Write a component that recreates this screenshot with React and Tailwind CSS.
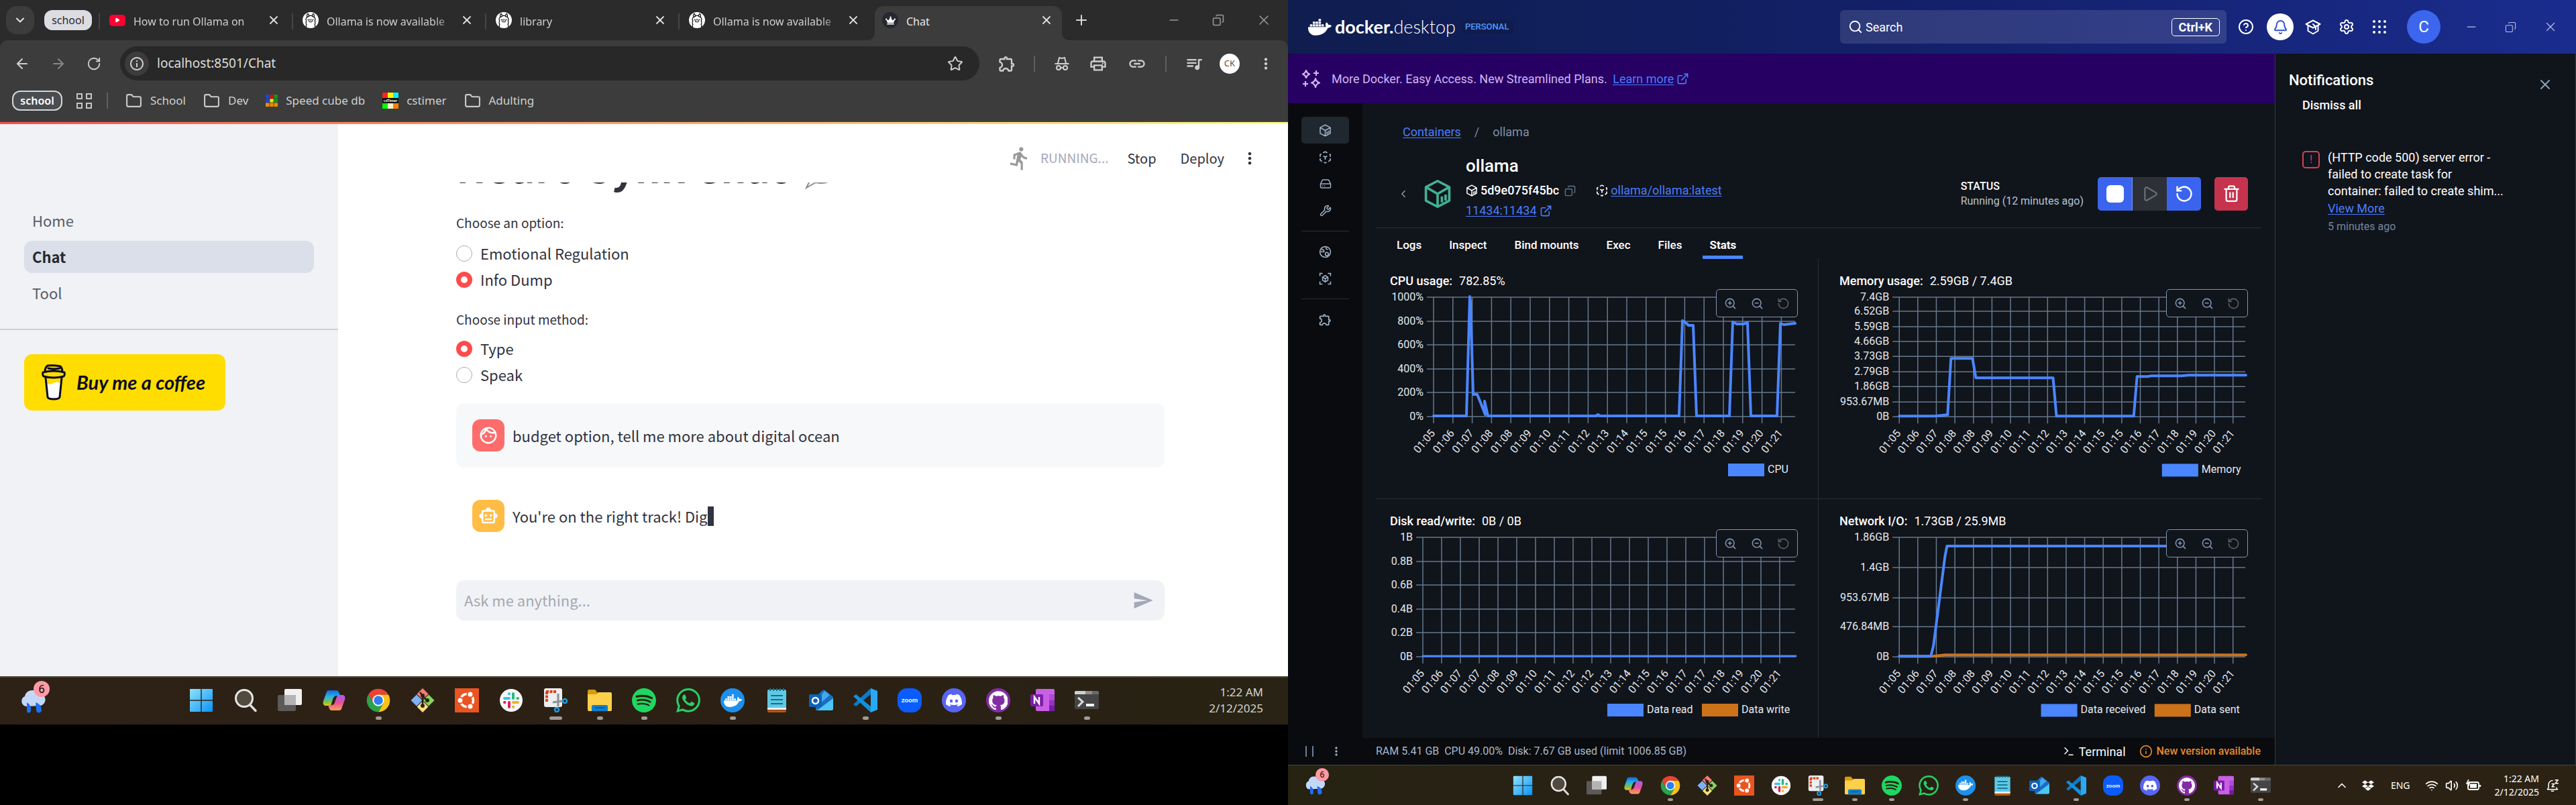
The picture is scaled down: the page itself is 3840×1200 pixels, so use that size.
import React from "react";
import {
  ArrowLeft, ArrowRight, RotateCw, X, Plus, Minus, Copy, Star, ChevronDown, ChevronLeft, ChevronUp,
  ExternalLink, Search, ZoomIn, ZoomOut, RotateCcw, Trash2, Bell, Settings, HardDrive, Wrench,
  CircleHelp, Info, Wifi, Volume2, Terminal, Play, Folder,
} from "lucide-react";
import { SiOllama, SiSpotify, SiWhatsapp, SiDiscord, SiGithub } from "react-icons/si";
import { FaDocker, FaDropbox, FaCrown } from "react-icons/fa";
import {
  MdDirectionsRun, MdMoreVert, MdSend, MdOutlineFace, MdOutlineSmartToy, MdOutlineExtension,
  MdOutlinePrint, MdLink, MdQueueMusic, MdInfoOutline,
} from "react-icons/md";

/* ---------- taskbar icons ---------- */

const WindowsIcon = () => (
  <svg viewBox="0 0 36 36" className="size-full">
    <defs>
      <linearGradient id="win" x1="0" y1="0" x2="1" y2="1">
        <stop offset="0" stopColor="#8fe3ff" /><stop offset="1" stopColor="#0a93f5" />
      </linearGradient>
    </defs>
    <path fill="url(#win)" d="M1 2q0-1 1-1h15.3v16.3H1zM18.7 1H34q1 0 1 1v15.300H18.700zM1 18.700h16.300V35H2q-1 0-1-1zM18.700 18.700H35V34q0 1-1 1H18.700z" />
  </svg>
);
const SearchTaskIcon = () => (
  <svg viewBox="0 0 36 36" className="size-full">
    <circle cx="16" cy="15" r="12.500" fill="#514a3f" stroke="#e6e6e8" strokeWidth="3" />
    <path d="M25 25l8 8.500" stroke="#dcdde0" strokeWidth="3.500" strokeLinecap="round" />
  </svg>
);
const TaskViewIcon = () => (
  <svg viewBox="0 0 36 36" className="size-full">
    <rect x="0" y="10" width="27" height="24" rx="2" fill="#5b5a58" />
    <rect x="10" y="1" width="26" height="24" rx="2" fill="#f0f0f1" />
    <rect x="10" y="10" width="17" height="15" fill="#b3b3b4" />
  </svg>
);
const CopilotIcon = () => (
  <svg viewBox="0 0 36 36" className="size-full">
    <defs>
      <linearGradient id="cpa" x1="0" y1="0" x2="0" y2="1">
        <stop offset="0" stopColor="#1663d8" /><stop offset=".4" stopColor="#27b3e8" /><stop offset=".75" stopColor="#7cc143" /><stop offset="1" stopColor="#f2c318" />
      </linearGradient>
      <linearGradient id="cpb" x1="0" y1="0" x2="0" y2="1">
        <stop offset="0" stopColor="#a45cf0" /><stop offset=".5" stopColor="#e8509d" /><stop offset="1" stopColor="#ffa04d" />
      </linearGradient>
    </defs>
    <path fill="url(#cpa)" d="M11 3h10c3 0 4 2 5 5l1 3h-5c-3 0-4 1-5 4l-3 8c-1 3-2 3-5 3H6c-4 0-5-3-4-7L6 8c1-4 2-5 5-5z" />
    <path fill="url(#cpb)" d="M25 33H15c-3 0-4-2-5-5l-1-3h5c3 0 4-1 5-4l3-8c1-3 2-3 5-3h3c4 0 5 3 4 7l-4 11c-1 4-2 5-5 5z" />
    <path fill="#2b2116" d="M17 14h3l-2.500 8h-3z" />
  </svg>
);
const ChromeIcon = () => (
  <svg viewBox="0 0 48 48" className="size-full">
    <path fill="#ea4335" d="M4.100 12.500A23 23 0 0 1 43.900 12.500H24L14 29.800z" />
    <path fill="#fbc116" d="M43.900 12.500A23 23 0 0 1 24 47L34 29.800 24 12.500z" />
    <path fill="#2ba24c" d="M24 47A23 23 0 0 1 4.100 12.500L14 29.800H34z" />
    <circle cx="24" cy="24" r="11.500" fill="#fff" /><circle cx="24" cy="24" r="9" fill="#2f7df0" />
  </svg>
);
const GitIcon = () => (
  <svg viewBox="0 0 36 36" className="size-full">
    <path fill="#f97a75" d="M18 0l8.500 8.500L18 17 9.500 8.500z" />
    <path fill="#7db2fb" d="M9 9.500l8.500 8.500L9 26.500.5 18z" />
    <path fill="#86d55c" d="M27 9.500l8.500 8.500-8.500 8.500-8.500-8.500z" />
    <path fill="#fbe07c" d="M18 19l8.500 8.500L18 36l-8.500-8.500z" />
    <path d="M14 6l4 5v15M18 11l6 7" stroke="#2b2116" strokeWidth="2.500" fill="none" />
    <circle cx="18" cy="11" r="3" fill="#2b2116" /><circle cx="25" cy="18" r="3" fill="#2b2116" /><circle cx="18" cy="26" r="3" fill="#2b2116" />
  </svg>
);
const UbuntuIcon = () => (
  <svg viewBox="0 0 36 36" className="size-full">
    <rect width="36" height="36" fill="#e95420" />
    <circle cx="18" cy="18" r="9.500" fill="none" stroke="#fff" strokeWidth="3.500" />
    <circle cx="8" cy="18" r="4.500" fill="#fff" stroke="#e95420" strokeWidth="2" />
    <circle cx="23" cy="9" r="4.500" fill="#fff" stroke="#e95420" strokeWidth="2" />
    <circle cx="23" cy="27" r="4.500" fill="#fff" stroke="#e95420" strokeWidth="2" />
  </svg>
);
const SlackIcon = () => (
  <svg viewBox="0 0 36 36" className="size-full">
    <circle cx="18" cy="18" r="17" fill="#f7f7f7" />
    <g strokeWidth="4" strokeLinecap="round">
      <path d="M8 15h7M15 8v.5" stroke="#36c5f0" /><path d="M21 8v7M28 15h-.5" stroke="#2eb67d" />
      <path d="M28 21h-7M21 28v-.5" stroke="#ecb22e" /><path d="M15 28v-7M8 21h.5" stroke="#e01e5a" />
    </g>
  </svg>
);
const SnipIcon = () => (
  <svg viewBox="0 0 36 36" className="size-full">
    <rect x="1" y="0" width="27" height="28" rx="3" fill="#eceef0" />
    <path d="M4 5h16M5 5v16" stroke="#d5431a" strokeWidth="4" strokeDasharray="4 1.500" fill="none" />
    <path d="M22 8v19M14 21l14-2" stroke="#8a9096" strokeWidth="3" />
    <circle cx="20" cy="32" r="3" fill="none" stroke="#209be0" strokeWidth="2.500" />
    <circle cx="32" cy="19" r="3" fill="none" stroke="#209be0" strokeWidth="2.500" />
  </svg>
);
const ExplorerIcon = () => (
  <svg viewBox="0 0 36 36" className="size-full">
    <path fill="#d99b0c" d="M0 4q0-2 2-2h9l4 5v6H0z" />
    <path fill="#ffd04a" d="M0 9h13l3-3h18q2 0 2 2v24q0 2-2 2H2q-2 0-2-2z" />
    <path fill="#0f7fd1" d="M6 34v-7q0-2 2-2h20q2 0 2 2v7z" /><path d="M11 29h14" stroke="#0a4f8f" strokeWidth="1.500" />
  </svg>
);
const SpotifyIcon = () => <SiSpotify className="size-full text-[#1ed760]" />;
const WhatsappIcon = () => <SiWhatsapp className="size-full text-[#25d366]" />;
const DockerIcon = () => (
  <span className="flex size-full items-center justify-center rounded-full bg-[#1d90ed] text-white"><FaDocker className="size-3/4" /></span>
);
const NotepadIcon = () => (
  <svg viewBox="0 0 36 36" className="size-full">
    <rect x="4" y="2" width="28" height="30" rx="2" fill="#5fc9e4" /><path fill="#f3f3f3" d="M4 29h28v3H4z" /><path fill="#b8570f" d="M4 32.500h28V34q0 2-2 2H6q-2 0-2-2z" />
    <path d="M8 0v4M13 0v4M18 0v4M23 0v4M28 0v4" stroke="#126c8f" strokeWidth="2" />
    <path d="M9 11h18M9 17h18M9 23h18" stroke="#10718f" strokeWidth="2" />
  </svg>
);
const OutlookIcon = () => (
  <svg viewBox="0 0 36 36" className="size-full">
    <path fill="#1c6cc4" d="M20 3q2-1 4 0l12 10v18q0 2-2 2H10V13z" /><path fill="#3fa9ee" d="M23 4l8 6-17 15v-9z" /><path fill="#4cc6f5" d="M36 15v15q0 3-3 3H12z" />
    <rect x="0" y="9" width="19" height="19" rx="2" fill="#0f62b8" />
    <circle cx="9.500" cy="18.500" r="4.500" fill="none" stroke="#fff" strokeWidth="2.500" />
  </svg>
);
const CodeIcon = () => (
  <svg viewBox="0 0 36 36" className="size-full">
    <path fill="#0b7bc8" d="M0 24l26-24v9L4 27z" /><path fill="#1290de" d="M0 12l4-3 22 18v9z" /><path fill="#29a9f3" d="M26 0l10 4v28l-10 4z" />
  </svg>
);
const ZoomIcon = () => (
  <svg viewBox="0 0 36 36" className="size-full">
    <rect width="36" height="36" rx="14" fill="#0b5cff" />
    <text x="18" y="21" textAnchor="middle" fill="#fff" fontSize="10" fontWeight="700" fontFamily="Lato, sans-serif">zoom</text>
  </svg>
);
const DiscordIcon = () => (
  <span className="flex size-full items-center justify-center rounded-full bg-[#5865f2] text-white"><SiDiscord className="size-2/3" /></span>
);
const GithubIcon = () => (
  <span className="flex size-full items-center justify-center rounded-full bg-[#832da5] text-white"><SiGithub className="size-4/5" /></span>
);
const OnenoteIcon = () => (
  <svg viewBox="0 0 36 36" className="size-full">
    <rect x="8" y="1" width="28" height="33" rx="2" fill="#c95fe4" /><path fill="#ae4bd5" d="M28 9h8v9h-8z" /><path fill="#9332bf" d="M28 18h8v8h-8z" /><path fill="#7719aa" d="M28 26h8v6q0 2-2 2h-6z" />
    <rect x="0" y="9" width="19" height="18" rx="2" fill="#7b1fa8" />
    <path d="M6 23V13l7 10V13" stroke="#fff" strokeWidth="2.400" fill="none" />
  </svg>
);
const TerminalIcon = () => (
  <svg viewBox="0 0 36 36" className="size-full">
    <rect x="0" y="4" width="36" height="27" rx="2" fill="#454545" /><path fill="#d0d0d0" d="M0 9V6q0-2 2-2h14v5z" /><path fill="#8f8f8f" d="M16 4h10v5H16z" /><path fill="#6a6a6a" d="M26 4h8q2 0 2 2v3H26z" />
    <path d="M5 14l7 6-7 7" stroke="#d8d8d8" strokeWidth="3" fill="none" /><path fill="#f5f5f5" d="M17 23h12v4H17z" />
  </svg>
);

const APPS = [
  ["Start", WindowsIcon], ["Search", SearchTaskIcon], ["Task view", TaskViewIcon], ["Copilot", CopilotIcon],
  ["Chrome", ChromeIcon, "dot"], ["Git Bash", GitIcon], ["Ubuntu", UbuntuIcon], ["Slack", SlackIcon],
  ["Snipping Tool", SnipIcon, "bar"], ["File Explorer", ExplorerIcon, "dot"], ["Spotify", SpotifyIcon, "dot"],
  ["WhatsApp", WhatsappIcon], ["Docker", DockerIcon, "dot"], ["Notepad", NotepadIcon], ["Outlook", OutlookIcon],
  ["VS Code", CodeIcon, "dot"], ["Zoom", ZoomIcon], ["Discord", DiscordIcon], ["GitHub Desktop", GithubIcon, "dot"],
  ["OneNote", OnenoteIcon], ["Terminal", TerminalIcon, "dot"],
];

const Weather = ({ small }) => (
  <button aria-label="Weather, 6 alerts" className={small ? "relative h-9 w-8" : "relative h-11 w-10"}>
    <svg viewBox="0 0 40 44" className="size-full">
      <path fill="#c3d8f8" d="M8 34a8 8 0 0 1-1-15 11 11 0 0 1 20-4 9 9 0 0 1 3 18z" />
      <path fill="#1d6ff2" d="M10 28q7 4 6 12a3 3 0 0 1-6 1zM23 28q9 3 9 11a3 3 0 0 1-8 1z" />
    </svg>
    <span className={small ? "absolute -top-1 -right-1 flex size-5 items-center justify-center rounded-full bg-[#ff9aa5] text-xs text-black" : "absolute -top-1 -right-1 flex size-6 items-center justify-center rounded-full bg-[#ff9aa5] text-base text-black"}>6</span>
  </button>
);

function TaskApps({ small }) {
  return (
    <div className={small ? "flex gap-[25px]" : "flex gap-[30px]"}>
      {APPS.map(([name, Icon, mark]) => (
        <button key={name} aria-label={name} className={small ? "relative size-[30px]" : "relative size-9"}>
          <Icon />
          {mark === "dot" && <span className={small ? "absolute -bottom-2 left-[11px] h-1 w-2 rounded-full bg-[#a19c96]" : "absolute -bottom-[11px] left-[14px] h-[5px] w-[9px] rounded-full bg-[#a19c96]"} />}
          {mark === "bar" && <span className={small ? "absolute -bottom-2 left-[7px] h-1 w-4 rounded-full bg-[#a19c96]" : "absolute -bottom-[11px] left-[9px] h-[5px] w-[19px] rounded-full bg-[#a19c96]"} />}
        </button>
      ))}
    </div>
  );
}

/* ---------- browser window ---------- */

const Llama = () => (
  <span className="flex size-6 shrink-0 items-center justify-center rounded-full bg-white text-black"><SiOllama className="size-5" /></span>
);

function BrowserTab({ icon, title, active, divider = true }) {
  return (
    <div className="relative flex w-72 min-w-0 items-center pr-[18px] pl-[15px]">
      {active && (
        <svg viewBox="0 0 304 51" preserveAspectRatio="none" className="absolute -left-2 bottom-0 h-[51px] w-[304px]">
          <path fill="#3c3c3c" d="M0 51q12 0 12-12V15Q12 0 27 0h249q15 0 15 15v24q0 12 12 12z" />
        </svg>
      )}
      {divider && <span className="absolute top-5 left-[-1px] h-6 w-[2px] bg-[#454545]" />}
      <span className="relative">{icon}</span>
      <span className={"relative ml-3 w-[190px] overflow-hidden pt-1 text-base whitespace-nowrap " + (active ? "text-[#e8e8e8]" : "text-[#cfcfcf] [mask-image:linear-gradient(to_right,black_85%,transparent)]")}>{title}</span>
      <button aria-label={"Close " + title} className="relative ml-auto text-[#e0e0e0]"><X size={20} strokeWidth={2.200} /></button>
    </div>
  );
}

const CubeFav = () => (
  <svg viewBox="0 0 18 18" className="size-[18px]">
    <path fill="#1c45d8" d="M0 0h6v6H0zM0 6h6v6H0z" /><path fill="#d31010" d="M6 0h6v6H6z" /><path fill="#0f9a10" d="M12 0h6v6h-6zM12 6h6v6h-6z" /><path fill="#f2e60a" d="M6 6h6v6H6z" /><path fill="#ef8a07" d="M0 12h18v6H0z" />
    <path d="M6 0v18M12 0v18M0 6h18M0 12h18" stroke="#3c3c3c" strokeWidth=".8" />
  </svg>
);
const TimerFav = () => (
  <svg viewBox="0 0 24 24" className="size-6">
    <path fill="#f22" d="M0 0h8v8H0z" /><path fill="#fff600" d="M8 0h8v8H8z" /><path fill="#08f0f8" d="M16 0h8v8h-8z" /><path fill="#111" d="M0 8h24v8H0z" /><path fill="#0f0" d="M0 16h8v8H0z" /><path fill="#f3f3c8" d="M8 16h8v8H8z" /><path fill="#ff8000" d="M16 16h8v8h-8z" />
    <text x="12" y="14" fontSize="6" fontWeight="700" fill="#fff" textAnchor="middle" fontFamily="Lato, sans-serif">csTimer</text>
  </svg>
);
const Incognito = () => (
  <svg viewBox="0 0 24 24" className="size-6" fill="none" stroke="currentColor" strokeWidth="2">
    <path d="M1.500 12h21M6 11l2-8 4 1 4-1 2 8" /><circle cx="7" cy="18" r="3" /><circle cx="17" cy="18" r="3" /><path d="M10 18h4" />
  </svg>
);

const Bookmark = ({ icon, children }) => (
  <a href="#bookmark" className="flex items-center gap-3 text-[#d0d0d0]">{icon}<span>{children}</span></a>
);
const folder = <Folder size={25} strokeWidth={2} className="text-[#cacaca]" />;

function Radio({ name, label, checked }) {
  return (
    <label className="flex h-[39px] items-center gap-3">
      <input type="radio" name={name} defaultChecked={checked} className="size-6 appearance-none rounded-full border border-[#a9abb0] bg-white checked:border-[7px] checked:border-[#ff4b4b]" />
      {label}
    </label>
  );
}

const PAGE_FONT = "font-['Noto_Sans_CJK_SC','Noto_Sans',sans-serif]";

function CoffeeCup() {
  return (
    <svg viewBox="0 0 36 54" className="h-[54px] w-9" fill="none" stroke="#0d0c22" strokeWidth="3" strokeLinejoin="round" strokeLinecap="round">
      <path d="M7 22l3 30q8 2 16 0l3-30z" fill="#fff" stroke="none" />
      <path d="M7 22h22l-1 6q-5-3-10 0t-10 1z" fill="#fd0" stroke="none" />
      <path d="M6 20l3 29q1 3 9 3t9-3l3-29" />
      <path d="M2 12q-1 4 1 6 15 4 30 0 2-2 1-6Q18 8 2 12zM5 11q0-6 4-9 9-1 19 1 3 3 3 8M10 6q8 2 17 0" />
    </svg>
  );
}

function BrowserWindow() {
  return (
    <section className="flex h-full flex-col bg-black pb-[120px] font-['Noto_Sans',sans-serif]">
      <div className="flex h-[60px] bg-[#2b2b2b]">
        <button aria-label="Search tabs" className="mt-[9px] ml-[9px] flex size-[42px] items-center justify-center rounded-2xl bg-[#3c3c3c] text-[#e3e3e3]"><ChevronDown size={20} strokeWidth={2.500} /></button>
        <button className="mt-[15px] mr-[11px] ml-[15px] h-[30px] w-[71px] rounded-xl bg-[#dcdde3] text-base text-[#2b2b2b]">school</button>
        <BrowserTab icon={<span className="flex h-[17px] w-6 items-center justify-center rounded-[5px] bg-[#f03]"><Play size={8} fill="#fff" className="text-white" /></span>} title="How to run Ollama on" />
        <BrowserTab icon={<Llama />} title="Ollama is now available" />
        <BrowserTab icon={<Llama />} title="library" />
        <BrowserTab icon={<Llama />} title="Ollama is now available" />
        <BrowserTab active divider={false} icon={<span className="flex size-6 items-center justify-center rounded-full bg-[#262730] text-white"><FaCrown size={15} /></span>} title="Chat" />
        <button aria-label="New tab" className="ml-3 text-[#d8d8d8]"><Plus size={24} /></button>
        <div className="mr-6 ml-auto flex items-center gap-[47px] text-[#9a9a9a]">
          <button aria-label="Minimize"><Minus size={20} /></button>
          <button aria-label="Restore"><Copy size={18} className="-scale-x-100" /></button>
          <button aria-label="Close window"><X size={24} strokeWidth={1.500} /></button>
        </div>
      </div>
      <div className="bg-[#2b2b2b]">
        <div className="flex h-[69px] items-center rounded-t-xl bg-[#3c3c3c] pr-5 pl-[21px] text-[#cfcfcf]">
          <button aria-label="Back" className="mr-[30px]"><ArrowLeft size={24} /></button>
          <button aria-label="Forward" className="mr-[30px] text-[#858585]"><ArrowRight size={24} /></button>
          <button aria-label="Reload" className="mr-7"><RotateCw size={22} /></button>
          <div className="flex h-[51px] flex-1 items-center rounded-full bg-[#282828] pr-6 pl-[7px]">
            <button aria-label="Site information" className="flex size-9 items-center justify-center rounded-full bg-[#3c3c3c]"><MdInfoOutline size={24} /></button>
            <input aria-label="Address" defaultValue="localhost:8501/Chat" className="ml-3 flex-1 bg-transparent text-[19px] text-[#dedede] outline-none" />
            <button aria-label="Bookmark"><Star size={24} /></button>
          </div>
          <button aria-label="Extensions" className="mr-[26px] ml-[27px]"><MdOutlineExtension size={28} /></button>
          <span className="h-6 w-[2px] bg-[#5f5f5f]" />
          <button aria-label="Incognito" className="mx-[28px]"><Incognito /></button>
          <button aria-label="Print" className="mr-[30px]"><MdOutlinePrint size={28} /></button>
          <button aria-label="Copy link" className="mr-[28px]"><MdLink size={28} /></button>
          <span className="h-6 w-[2px] bg-[#5f5f5f]" />
          <button aria-label="Media" className="mr-6 ml-[27px]"><MdQueueMusic size={28} /></button>
          <button aria-label="Profile" className="mr-[26px] flex size-[30px] items-center justify-center rounded-full bg-white text-[13px] text-[#555]">CK</button>
          <button aria-label="Menu"><MdMoreVert size={26} /></button>
        </div>
      </div>
      <nav className="flex h-[53px] items-center border-b border-[#4a4a4a] bg-[#3c3c3c] pb-[10px] pl-[18px] text-[17px]">
        <button className="h-[30px] w-[75px] rounded-xl border-2 border-[#d5d5d5] bg-[#4a4d50] text-base leading-6 font-semibold text-white">school</button>
        <button aria-label="All apps" className="ml-[21px] grid size-[23px] grid-cols-2 gap-[5px]">
          {[0, 1, 2, 3].map((i) => <span key={i} className="size-[9px] border-2 border-[#c5c5c5]" />)}
        </button>
        <span className="mr-[26px] ml-[22px] h-6 w-[2px] bg-[#5f5f5f]" />
        <div className="flex items-center gap-[26px]">
          <Bookmark icon={folder}>School</Bookmark>
          <Bookmark icon={folder}>Dev</Bookmark>
          <Bookmark icon={<CubeFav />}>Speed cube db</Bookmark>
          <Bookmark icon={<TimerFav />}>cstimer</Bookmark>
          <Bookmark icon={folder}>Adulting</Bookmark>
        </div>
      </nav>
      <div className="h-[3px] bg-gradient-to-r from-[#ff4b4b] via-[#ffa66a] to-[#fffd80]" />

      <div className={"flex min-h-0 flex-1 bg-white text-[22px] text-[#31333f] " + PAGE_FONT}>
        <aside className="w-[504px] bg-[#f0f2f6]">
          <nav className="mt-[120px] flex flex-col gap-[6px] px-9 text-[#595b67]">
            <a href="#home" className="h-12 rounded-xl px-3 leading-[46px]">Home</a>
            <a href="#chat" className="h-12 rounded-xl bg-[#dadfe9] px-3 leading-[46px] font-bold text-[#262730]">Chat</a>
            <a href="#tool" className="h-12 rounded-xl px-3 leading-[46px]">Tool</a>
          </nav>
          <hr className="mt-[29px] border-t-2 border-[#cdced6]" />
          <a href="#coffee" className="mt-9 ml-9 flex h-[84px] w-[300px] items-center gap-4 rounded-xl bg-[#fd0] pl-[26px] font-['Lato',cursive] text-[29px] font-bold text-[#0d0c22] italic">
            <CoffeeCup /><span className="whitespace-nowrap">Buy me a coffee</span>
          </a>
        </aside>
        <main className="flex min-w-0 flex-1 flex-col">
          <header className="flex h-[87px] items-center justify-end pt-[14px] pr-[43px]">
            <MdDirectionsRun size={38} className="mr-3 text-[#9a9a9a]" />
            <span className="mr-7 text-[19px] text-[#a3a8b8]">RUNNING...</span>
            <button className="mr-[36px] text-[20px]">Stop</button>
            <button className="mr-6 text-[20px]">Deploy</button>
            <button aria-label="Menu"><MdMoreVert size={28} /></button>
          </header>
          <div className="flex flex-1 flex-col pr-[184px] pl-44">
            <div className="flex h-[19px] items-end gap-7 overflow-hidden">
              <h1 className="mb-[14px] text-[60px] leading-[60px] font-bold whitespace-nowrap">Neuro Synk Chat</h1>
              <svg viewBox="0 0 48 48" className="mb-[9px] size-12 shrink-0" fill="none" stroke="#8d8d92" strokeWidth="2">
                <path d="M24 3C11 3 2 11 2 21c0 6 2 10 6 13l-6 12 14-8q4 1 8 1c13 0 22-8 22-18S37 3 24 3z" />
              </svg>
            </div>
            <fieldset className="mt-[23px]">
              <legend className="h-[35px] text-[19px] leading-[35px]">Choose an option:</legend>
              <div className="mt-[9px]">
                <Radio name="mode" label="Emotional Regulation" />
                <Radio name="mode" label="Info Dump" checked />
              </div>
            </fieldset>
            <fieldset className="mt-[22px]">
              <legend className="h-[35px] text-[19px] leading-[35px]">Choose input method:</legend>
              <div className="mt-[7px]">
                <Radio name="method" label="Type" checked />
                <Radio name="method" label="Speak" />
              </div>
            </fieldset>
            <div className="mt-[23px] flex h-24 items-center gap-3 rounded-xl bg-[#f7f8fa] px-6">
              <span className="flex size-12 items-center justify-center rounded-xl bg-[#ff6c6c] text-white"><MdOutlineFace size={30} /></span>
              <p>budget option, tell me more about digital ocean</p>
            </div>
            <div className="mt-6 flex h-24 items-center gap-3 px-6">
              <span className="flex size-12 items-center justify-center rounded-xl bg-[#ffbd45] text-white"><MdOutlineSmartToy size={30} /></span>
              <p className="flex items-center">You're on the right track! Dig<span className="h-[29px] w-[9px] bg-[#31333f]" /></p>
            </div>
            <form className="mt-12 flex h-[60px] items-center rounded-xl bg-[#f0f2f6] pr-4 pb-px pl-3" onSubmit={(e) => e.preventDefault()}>
              <input aria-label="Message" placeholder="Ask me anything..." className="flex-1 bg-transparent outline-none placeholder:text-[#a6a8b0]" />
              <button aria-label="Send" className="text-[#a3a8b8]"><MdSend size={32} /></button>
            </form>
          </div>
        </main>
      </div>

      <footer className="flex h-[72px] items-center border-t-2 border-[#4c463c] bg-gradient-to-r from-[#2e2115] via-[#2c2014] to-[#282314] pb-[2px]">
        <div className="w-[282px] pl-[30px]"><Weather /></div>
        <TaskApps />
        <p className="mr-[37px] ml-auto text-right text-[17px] leading-6 text-[#d6d3ce]">1:22 AM<br />2/12/2025</p>
      </footer>
    </section>
  );
}

/* ---------- docker window ---------- */

const Cube = ({ size, w = 2 }) => (
  <svg viewBox="0 0 24 24" width={size} height={size} fill="none" stroke="currentColor" strokeWidth={w} strokeLinejoin="round">
    <path d="M12 1.500l9.500 5v11L12 22.500l-9.500-5v-11zM2.500 6.500L12 12l9.500-5.500M12 12v10.500M15.500 14v5M18.500 12.500v5" />
  </svg>
);
const ImageCube = ({ size }) => (
  <svg viewBox="0 0 24 24" width={size} height={size} fill="none" stroke="currentColor" strokeWidth="2.200">
    <path d="M8 3.500l4-2 4 2M20 6l1.500 1v4M21.500 14v3.500L18 20M14.500 21.500l-2.500 1-2.500-1M6 20l-3.500-2.500V14M2.500 11V7L4.500 5.500M8.500 9.500L12 12l3.500-2.500M12 12v4.500" />
  </svg>
);
const Sparkles = () => (
  <svg viewBox="0 0 28 28" className="size-7" fill="none" stroke="#d2b5f5" strokeWidth="2.200" strokeLinejoin="round">
    <path d="M7 2q1 4 5 5.500-4 1.500-5 5.500-1-4-5-5.500Q6 6 7 2zM21 14q1 5 6 6.500-5 1.500-6 6.500-1-5-6-6.500 5-1.500 6-6.500zM22 2v8M18 6h8M6 18v8M2 22h8" />
  </svg>
);
const Learning = () => (
  <svg viewBox="0 0 24 24" className="size-6" fill="none" stroke="currentColor" strokeWidth="2" strokeLinejoin="round" strokeLinecap="round">
    <path d="M1.500 8L12 2.500 22.500 8 12 13.500zM4.500 10v8L12 22.500l7.500-4.500v-8M12 8l4 4v4" />
  </svg>
);
const Battery = () => (
  <svg viewBox="0 0 24 24" className="size-6" fill="none" stroke="currentColor" strokeWidth="1.800">
    <rect x="4" y="7" width="16" height="11" rx="2.500" /><rect x="7" y="9.500" width="10" height="6" fill="currentColor" stroke="none" />
    <path d="M22 11v3" strokeWidth="2.400" /><path d="M5 3L2 9h4l-2 5" strokeWidth="1.600" />
  </svg>
);
const BellSnooze = () => (
  <svg viewBox="0 0 24 24" className="size-5" fill="none" stroke="currentColor" strokeWidth="1.800" strokeLinejoin="round" strokeLinecap="round">
    <path d="M12 3a7 7 0 0 0-7 7v5l-2 4h18l-2-3M10 22h4M11 9h4l-4 5h4M17 2h5l-5 6h5" />
  </svg>
);

function Chart({ title, value, left, ys, xs, xStep, series, legend }) {
  const right = 625;
  return (
    <div className="pt-[22px]">
      <h2 className="ml-[21px] flex h-[22px] gap-[10px] text-[18px] leading-[22px] font-medium text-white">{title}:<span className="font-normal">{value}</span></h2>
      <div className="relative">
        <svg viewBox="0 0 649 290" className="block w-full" fontFamily="Roboto, sans-serif" fill="#e4e9ee">
          <g stroke="#65798e" strokeWidth="1.500">
            {ys.map(([label, y]) => <line key={label} x1={left - 10} x2={right} y1={y} y2={y} />)}
            {xs.map((_, i) => <line key={i} x1={left + i * xStep} x2={left + i * xStep} y1="13" y2="201" />)}
          </g>
          {ys.map(([label, y]) => <text key={label} x={left - 15} y={y + 5} textAnchor="end" fontSize="16">{label}</text>)}
          {xs.map((m, i) => (
            <text key={i} fontSize="16" textAnchor="end" transform={`translate(${left + i * xStep + 3} 216) rotate(-50)`}>{"01:" + m}</text>
          ))}
          {series.map(([color, points, width]) => <polyline key={color} points={points} fill="none" stroke={color} strokeWidth={width} strokeLinejoin="round" strokeLinecap="round" />)}
          {legend.map(([label, color, x]) => (
            <g key={label}><rect x={x} y="261" width="54" height="19" fill={color} /><text x={x + 59} y="275" fontSize="16">{label}</text></g>
          ))}
        </svg>
        <div className="absolute top-[1px] right-5 flex h-[42px] w-[122px] items-center justify-between rounded-[5px] border border-[#8096b0] bg-[#10141b] px-[11px] text-[#8096b0]">
          <button aria-label={"Zoom in " + title}><ZoomIn size={19} /></button>
          <button aria-label={"Zoom out " + title}><ZoomOut size={19} /></button>
          <button aria-label={"Reset " + title} className="text-[#5a5f66]"><RotateCcw size={19} /></button>
        </div>
      </div>
    </div>
  );
}

const X19 = ["05", "06", "07", "08", "08", "09", "10", "11", "12", "13", "14", "15", "15", "16", "17", "18", "19", "20", "21"];
const X20 = ["05", "06", "07", "07", "08", "09", "10", "11", "12", "12", "13", "14", "15", "16", "17", "17", "18", "19", "20", "21"];
const BLUE = "#4a86ff";
const ORANGE = "#cc7319";

const CPU = {
  title: "CPU usage", value: "782.85%", left: 86, xs: X19, xStep: 28.800,
  ys: [["1000%", 13], ["800%", 49], ["600%", 84], ["400%", 120], ["200%", 155], ["0%", 191]],
  series: [[BLUE, "86,190 135,190 140,12 141,20 145,158 151,158 156,170 163,188 162,168 167,190 328,190 331,188 334,190 452,190 457,48 463,52 466,55 473,55 478,190 527,190 532,50 538,53 548,53 554,51 559,190 598,190 603,52 608,54 616,53 625,52", 4]],
  legend: [["CPU", BLUE, 525]],
};
const MEMORY = {
  title: "Memory usage", value: "2.59GB / 7.4GB", left: 110, xs: X19, xStep: 27.600,
  ys: [["7.4GB", 13], ["6.52GB", 34], ["5.59GB", 57], ["4.66GB", 79], ["3.73GB", 101], ["2.79GB", 124], ["1.86GB", 146], ["953.67MB", 169], ["0B", 191]],
  series: [[BLUE, "110,190 163,190 182,188 187,104 219,104 224,133 339,133 344,190 459,190 464,131 480,131 485,130 530,130 540,129 626,129", 4]],
  legend: [["Memory", BLUE, 501]],
};
const DISK = {
  title: "Disk read/write", value: "0B / 0B", left: 70, xs: X20, xStep: 28,
  ys: [["1B", 13], ["0.8B", 49], ["0.6B", 84], ["0.4B", 120], ["0.2B", 155], ["0B", 191]],
  series: [[BLUE, "70,190 626,190", 3]],
  legend: [["Data read", BLUE, 345], ["Data write", ORANGE, 486]],
};
const NETWORK = {
  title: "Network I/O", value: "1.73GB / 25.9MB", left: 110, xs: X19, xStep: 27.600,
  ys: [["1.86GB", 13], ["1.4GB", 58], ["953.67MB", 103], ["476.84MB", 146], ["0B", 191]],
  series: [[ORANGE, "110,190 160,190 178,188 626,188", 4], [BLUE, "110,190 157,190 161,174 178,42 181,26 626,26", 4]],
  legend: [["Data received", BLUE, 321], ["Data sent", ORANGE, 490]],
};

const link = "text-[#4a7dff] underline underline-offset-2";
const SIDE = [["Images", <ImageCube size={19} />], ["Volumes", <HardDrive size={18} />], ["Builds", <Wrench size={18} />]];

const Scout = () => (
  <svg viewBox="0 0 24 24" className="size-[19px]" fill="none" stroke="currentColor" strokeWidth="2">
    <circle cx="12" cy="12" r="10" /><path d="M4 7q5 0 6 4-4 2-7 0M14 3q-2 4 3 5" /><circle cx="15" cy="16" r="3" />
  </svg>
);
const Kit = () => (
  <svg viewBox="0 0 24 24" className="size-[19px]" fill="none" stroke="currentColor" strokeWidth="2">
    <path d="M2 7V2h5M17 2h5v5M22 17v5h-5M7 22H2v-5M12 6l5 3v6l-5 3-5-3V9zM7 9l5 3 5-3M12 12v6" />
  </svg>
);

function DockerWindow() {
  return (
    <section className="flex h-full min-w-0 flex-col bg-[#10141b] font-['Roboto',sans-serif] text-[18px] text-white">
      <header className="flex h-20 items-center bg-gradient-to-r from-[#0f1d4f] via-[#13206a] to-[#1a2c8e] pr-[27px] pl-[30px]">
        <FaDocker size={35} />
        <span className="ml-[5px] font-['Lato',sans-serif] text-[27px] leading-8"><b>docker.</b><span className="font-light">desktop</span></span>
        <span className="ml-2 rounded-md bg-[#0f1c4c] px-[6px] text-[13px] leading-5 font-medium text-[#4f9bff]">PERSONAL</span>
        <label className="ml-auto flex h-[50px] w-[576px] items-center rounded-md bg-white/12 pr-[10px] pl-3">
          <Search size={22} />
          <input aria-label="Search" placeholder="Search" className="ml-1 min-w-0 flex-1 bg-transparent outline-none placeholder:text-white" />
          <kbd className="rounded-[5px] border border-white px-[10px] font-['Roboto',sans-serif] leading-[25px] font-bold">Ctrl+K</kbd>
        </label>
        <button aria-label="Help" className="ml-[17px]"><CircleHelp size={24} /></button>
        <button aria-label="Notifications" className="ml-[19px] flex size-10 items-center justify-center rounded-full bg-white text-[#2a4ed8]"><Bell size={23} /></button>
        <button aria-label="Learning center" className="ml-[17px]"><Learning /></button>
        <button aria-label="Settings" className="ml-[26px]"><Settings size={24} /></button>
        <button aria-label="Extensions" className="ml-[27px] grid grid-cols-3 gap-[4px]">
          {Array.from({ length: 9 }, (_, i) => <span key={i} className="size-1 rounded-full bg-white" />)}
        </button>
        <button aria-label="Account" className="ml-[31px] size-[50px] rounded-full bg-[#3d66ee] text-[24px]">C</button>
        <div className="ml-9 flex items-center gap-10 text-[#b9c1e6]">
          <button aria-label="Minimize"><Minus size={20} strokeWidth={1.500} /></button>
          <button aria-label="Restore"><Copy size={17} strokeWidth={1.500} className="-scale-x-100" /></button>
          <button aria-label="Close"><X size={22} strokeWidth={1.300} /></button>
        </div>
      </header>

      <div className="flex min-h-0 flex-1">
        <div className="flex min-w-0 flex-1 flex-col">
          <div className="flex h-[74px] items-center rounded-tl-lg bg-[#260063] pl-5 text-[#d2b5f5]">
            <Sparkles />
            <p className="ml-[17px]">More Docker. Easy Access. New Streamlined Plans. <a href="#plans" className={"ml-1 " + link}>Learn more</a></p>
            <ExternalLink size={19} className="ml-1 text-[#4a7dff]" />
          </div>
          <div className="flex flex-1">
            <nav className="flex w-[111px] flex-col items-center bg-[#090b0e] pt-5 text-[#9dafc3]">
              <button aria-label="Containers" className="flex h-10 w-[71px] items-center justify-center rounded-[5px] bg-[#1f272f]"><Cube size={19} /></button>
              {SIDE.map(([name, icon]) => <button key={name} aria-label={name} className="flex h-10 w-[71px] items-center justify-center">{icon}</button>)}
              <hr className="my-[10px] w-[71px] border-[#2a2e33]" />
              <button aria-label="Scout" className="flex h-10 w-[71px] items-center justify-center"><Scout /></button>
              <button aria-label="Dev Environments" className="flex h-10 w-[71px] items-center justify-center"><Kit /></button>
              <hr className="my-[10px] w-[71px] border-[#2a2e33]" />
              <button aria-label="Add Extensions" className="flex h-10 w-[71px] items-center justify-center"><MdOutlineExtension size={21} /></button>
            </nav>
            <div className="min-w-0 flex-1 px-5">
              <div className="ml-10 flex gap-5 pt-[31px] leading-6 text-[#7e90a5]">
                <a href="#containers" className={link}>Containers</a><span>/</span><span>ollama</span>
              </div>
              <div className="flex items-center pt-[19px]">
                <button aria-label="Back to containers" className="mt-5 ml-8 text-[#9dafc3]"><ChevronLeft size={18} strokeWidth={1.500} /></button>
                <span className="mt-5 ml-5 text-[#43b096]"><Cube size={44} /></span>
                <div className="ml-5 leading-[30px]">
                  <h1 className="mb-[3px] h-[38px] text-[26px] leading-[38px] font-medium">ollama</h1>
                  <p className="flex items-center">
                    <Cube size={18} /><span className="mr-2 ml-1 font-medium">5d9e075f45bc</span>
                    <button aria-label="Copy id" className="mr-[30px] text-[#607488]"><Copy size={17} className="-scale-x-100" /></button>
                    <ImageCube size={18} /><a href="#image" className={"ml-1 " + link}>ollama/ollama:latest</a>
                  </p>
                  <p className="flex items-center"><a href="#port" className={"mr-1 " + link}>11434:11434</a><ExternalLink size={19} className="text-[#4a7dff]" /></p>
                </div>
                <div className="mt-5 ml-auto text-base leading-[22px]">
                  <p className="font-medium">STATUS</p>
                  <p className="text-[#b8c2cc]">Running (12 minutes ago)</p>
                </div>
                <div className="mt-5 ml-[21px] flex overflow-hidden rounded-[5px] bg-[#3a64ee]">
                  <button aria-label="Stop" className="flex h-[50px] w-[52px] items-center justify-center border-r border-[#6f9bff]"><span className="size-[26px] rounded-md bg-white" /></button>
                  <button aria-label="Start" className="flex h-[50px] w-[51px] items-center justify-center bg-[#2d3037] text-[#6c7077]"><Play size={26} /></button>
                  <button aria-label="Restart" className="flex h-[50px] w-[51px] items-center justify-center"><RotateCcw size={28} /></button>
                </div>
                <button aria-label="Delete" className="mt-5 mr-5 ml-5 flex size-[50px] items-center justify-center rounded-[5px] bg-[#c6334d]"><Trash2 size={27} /></button>
              </div>
              <div role="tablist" className="mt-[10px] flex gap-[41px] border-t border-[#2b2f35] pl-[31px] text-[17px]">
                {["Logs", "Inspect", "Bind mounts", "Exec", "Files"].map((t) => <button key={t} role="tab" className="h-[46px] pt-[6px] font-medium">{t}</button>)}
                <button role="tab" aria-selected="true" className="-mx-[10px] h-[46px] border-b-[5px] border-[#4a86ff] px-[10px] pt-[11px] font-bold">Stats</button>
              </div>
              <div className="grid grid-cols-2">
                <div className="border-r border-b border-[#2b2f35] pr-[10px] pb-[23px]"><Chart {...CPU} /></div>
                <div className="border-b border-[#2b2f35] pb-[23px] pl-[10px]"><Chart {...MEMORY} /></div>
                <div className="border-r border-[#2b2f35] pr-[10px] pb-[21px]"><Chart {...DISK} /></div>
                <div className="pb-[21px] pl-[10px]"><Chart {...NETWORK} /></div>
              </div>
            </div>
          </div>
          <div className="flex h-10 items-center bg-[#090b0e] pr-[21px] text-base">
            <button aria-label="Pause" className="ml-[26px] flex h-4 w-3 justify-between"><span className="w-[2px] bg-[#6f8196]" /><span className="w-[2px] bg-[#6f8196]" /></button>
            <button aria-label="More" className="mr-[49px] ml-6 text-[#9dafc3]"><MdMoreVert size={20} /></button>
            <p className="whitespace-pre text-[#a9b9cb]">RAM 5.41 GB  CPU 49.00%  Disk: 7.67 GB used (limit 1006.85 GB)</p>
            <button className="ml-auto flex items-center gap-[6px] text-[18px]"><Terminal size={18} />Terminal</button>
            <button className="ml-5 flex items-center gap-[6px] font-medium text-[#e5892a]"><Info size={20} />New version available</button>
          </div>
        </div>

        <aside className="w-[449px] border-r border-l border-[#33373e] pl-5">
          <div className="flex items-center">
            <h2 className="mt-[22px] text-[22px] leading-[26px] font-medium">Notifications</h2>
            <button aria-label="Close notifications" className="mt-[34px] mr-[33px] ml-auto text-[#8ba1ba]"><X size={24} /></button>
          </div>
          <button className="mt-[5px] ml-5 font-medium">Dismiss all</button>
          <article className="mt-[52px] ml-5 flex items-start gap-3">
            <span className="mt-[3px] flex size-[26px] shrink-0 items-center justify-center rounded-[5px] border-2 border-[#d0435c] text-base leading-none text-[#d0435c]">!</span>
            <div className="leading-[25px]">
              <p className="w-[268px]">(HTTP code 500) server error - failed to create task for <br />container: failed to create shim...</p>
              <a href="#more" className={"mt-[1px] block " + link}>View More</a>
              <time className="mt-[2px] block text-base leading-[25px] text-[#74879c]">5 minutes ago</time>
            </div>
          </article>
        </aside>
      </div>

      <footer className="flex h-[60px] items-center border-t border-[#4c463c] bg-gradient-to-r from-[#262313] via-[#2a2015] to-[#2c2214] font-['Noto_Sans',sans-serif]">
        <div className="w-[335px] pl-[25px]"><Weather small /></div>
        <TaskApps small />
        <div className="mr-[25px] ml-auto flex items-center">
          <ChevronUp size={20} /><FaDropbox size={18} className="mr-[25px] ml-5" />
          <span className="mr-[22px] text-[14px]">ENG</span>
          <Wifi size={20} className="mr-[10px]" /><Volume2 size={20} className="mr-[10px]" /><span className="mr-5"><Battery /></span>
          <p className="mr-[10px] text-right text-[14px] leading-5">1:22 AM<br />2/12/2025</p>
          <BellSnooze />
        </div>
      </footer>
    </section>
  );
}

export default function App() {
  return (
    <div className="grid h-screen grid-cols-2 bg-black">
      <BrowserWindow />
      <DockerWindow />
    </div>
  );
}
